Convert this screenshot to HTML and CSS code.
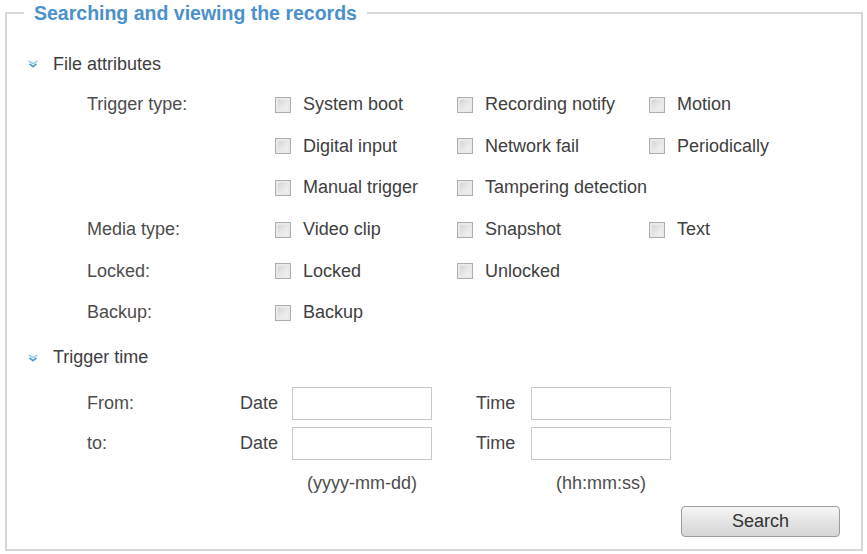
FILE: index.html
```html
<!DOCTYPE html>
<html>
<head>
<meta charset="utf-8">
<link rel="stylesheet" href="styles.css">
</head>
<body>
<fieldset class="box">
  <legend class="title">Searching and viewing the records</legend>

  <div class="section-head">
    <svg class="chev" width="12" height="8" viewBox="0 0 12 8"><polyline points="1.5,1 6,3.5 10.5,1" fill="none" stroke="#8cc3e6" stroke-width="1.4"/><polyline points="2.5,3.8 6,6.6 9.5,3.8" fill="none" stroke="#4a9cd4" stroke-width="1.7"/></svg>
    <span>File attributes</span>
  </div>

  <div class="attr-grid">
    <div class="lbl">Trigger type:</div>
    <label class="opt"><input type="checkbox" class="cb"><span>System boot</span></label>
    <label class="opt"><input type="checkbox" class="cb"><span>Recording notify</span></label>
    <label class="opt"><input type="checkbox" class="cb"><span>Motion</span></label>

    <div class="lbl"></div>
    <label class="opt"><input type="checkbox" class="cb"><span>Digital input</span></label>
    <label class="opt"><input type="checkbox" class="cb"><span>Network fail</span></label>
    <label class="opt"><input type="checkbox" class="cb"><span>Periodically</span></label>

    <div class="lbl"></div>
    <label class="opt"><input type="checkbox" class="cb"><span>Manual trigger</span></label>
    <label class="opt"><input type="checkbox" class="cb"><span>Tampering detection</span></label>
    <div></div>

    <div class="lbl">Media type:</div>
    <label class="opt"><input type="checkbox" class="cb"><span>Video clip</span></label>
    <label class="opt"><input type="checkbox" class="cb"><span>Snapshot</span></label>
    <label class="opt"><input type="checkbox" class="cb"><span>Text</span></label>

    <div class="lbl">Locked:</div>
    <label class="opt"><input type="checkbox" class="cb"><span>Locked</span></label>
    <label class="opt"><input type="checkbox" class="cb"><span>Unlocked</span></label>
    <div></div>

    <div class="lbl">Backup:</div>
    <label class="opt"><input type="checkbox" class="cb"><span>Backup</span></label>
    <div></div>
    <div></div>
  </div>

  <div class="section-head second">
    <svg class="chev" width="12" height="8" viewBox="0 0 12 8"><polyline points="1.5,1 6,3.5 10.5,1" fill="none" stroke="#8cc3e6" stroke-width="1.4"/><polyline points="2.5,3.8 6,6.6 9.5,3.8" fill="none" stroke="#4a9cd4" stroke-width="1.7"/></svg>
    <span>Trigger time</span>
  </div>

  <div class="time-grid">
    <div class="lbl">From:</div>
    <div class="sub">Date</div>
    <input type="text" class="field">
    <div></div>
    <div class="sub">Time</div>
    <input type="text" class="field">

    <div class="lbl">to:</div>
    <div class="sub">Date</div>
    <input type="text" class="field">
    <div></div>
    <div class="sub">Time</div>
    <input type="text" class="field">

    <div></div>
    <div></div>
    <div class="fmt">(yyyy-mm-dd)</div>
    <div></div>
    <div></div>
    <div class="fmt">(hh:mm:ss)</div>
  </div>

  <div class="actions">
    <button class="btn" type="button">Search</button>
  </div>
</fieldset>
</body>
</html>
```

FILE: styles.css
```css
html, body {
  margin: 0;
  padding: 0;
  background: #ffffff;
}

body {
  font-family: "Liberation Sans", Arial, sans-serif;
  font-size: 18px;
  color: #444444;
}

.box {
  margin: 0 0 0 5px;
  width: 858px;
  height: 551px;
  box-sizing: border-box;
  border: 2px solid #d8d8d8;
  padding: 0;
  min-width: 0;
}

.title {
  margin-left: 17px;
  padding: 0 10px;
  font-size: 19.5px;
  font-weight: bold;
  color: #4b91cc;
  line-height: 26px;
}

.section-head {
  display: flex;
  align-items: center;
  height: 40px;
  margin-top: 18px;
  padding-left: 20px;
  color: #3e3e3e;
}

.section-head.second {
  margin-top: 4px;
}

.chev {
  display: block;
  margin-right: 14px;
}

.attr-grid {
  display: grid;
  grid-template-columns: 188px 182px 192px 1fr;
  grid-auto-rows: 41.6px;
  padding-left: 80px;
  align-items: center;
}

.lbl {
  color: #4d4d4d;
}

.opt {
  display: flex;
  align-items: center;
  color: #404040;
  white-space: nowrap;
}

.cb {
  appearance: none;
  -webkit-appearance: none;
  width: 16px;
  height: 16px;
  margin: 0 12px 0 0;
  box-sizing: border-box;
  border: 1px solid #aeaeae;
  background: linear-gradient(135deg, #cfcfcf 0%, #e8e8e8 55%, #f6f6f6 100%);
  box-shadow: inset 0 0 0 2px #e9e9e9;
}

.time-grid {
  display: grid;
  grid-template-columns: 153px 52px 140px 44px 55px 140px;
  grid-template-rows: 40px 40px 40px;
  padding-left: 80px;
  margin-top: 6px;
  align-items: center;
}

.sub {
  color: #444444;
}

.field {
  width: 140px;
  height: 33px;
  box-sizing: border-box;
  border: 1px solid #c8c8c8;
  background: #ffffff;
  margin: 0;
  padding: 0 4px;
  font: inherit;
}

.fmt {
  text-align: center;
  color: #4d4d4d;
}

.actions {
  display: flex;
  justify-content: flex-end;
  padding-right: 21px;
  margin-top: 2px;
}

.btn {
  width: 159px;
  height: 31px;
  border: 1px solid #9c9c9c;
  border-radius: 4px;
  background: linear-gradient(#f7f7f7, #e2e2e2 55%, #d6d6d6);
  font-family: "Liberation Sans", Arial, sans-serif;
  font-size: 18px;
  color: #333333;
  padding: 0;
}
```
